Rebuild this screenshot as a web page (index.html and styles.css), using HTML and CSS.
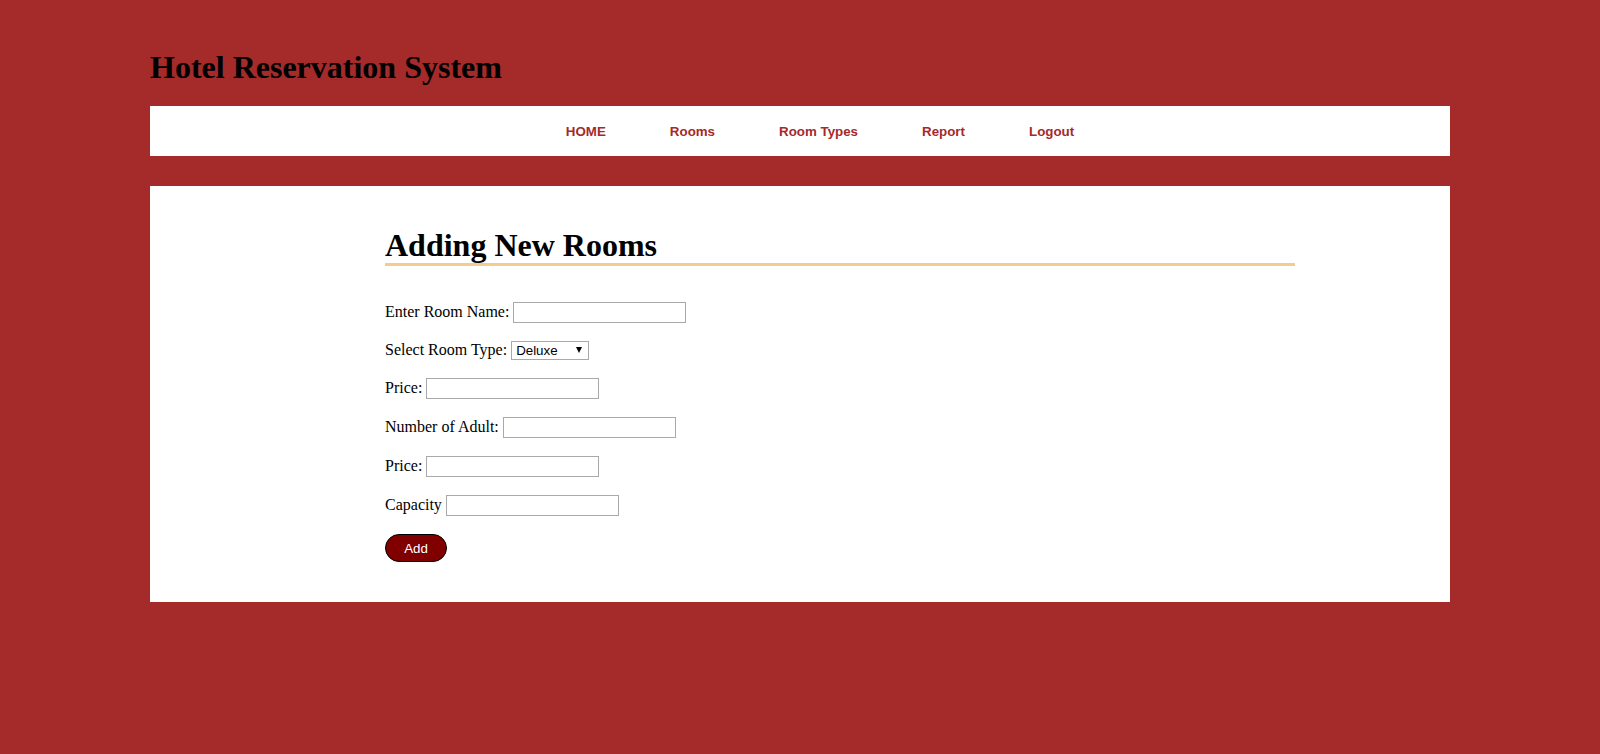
FILE: index.html
```html
<!DOCTYPE html>
<html>
<head>
<meta charset="utf-8">
<title>Hotel Reservation System</title>
<link rel="stylesheet" href="styles.css">
</head>
<body>
<div class="wrapper">
  <h1 class="site-title">Hotel Reservation System</h1>
  <nav class="nav">
    <a href="#">HOME</a>
    <a href="#">Rooms</a>
    <a href="#">Room Types</a>
    <a href="#">Report</a>
    <a href="#">Logout</a>
  </nav>
  <main class="content">
    <div class="inner">
      <h1 class="page-title">Adding New Rooms</h1>
      <form class="form">
        <div class="row"><label>Enter Room Name:</label> <input type="text" class="field"></div>
        <div class="row row-select"><label>Select Room Type:</label> <span class="select-wrap"><select class="select"><option>Deluxe</option><option>Standard</option></select></span></div>
        <div class="row"><label>Price:</label> <input type="text" class="field"></div>
        <div class="row"><label>Number of Adult:</label> <input type="text" class="field"></div>
        <div class="row"><label>Price:</label> <input type="text" class="field"></div>
        <div class="row"><label>Capacity</label> <input type="text" class="field"></div>
        <div class="actions"><button type="button" class="btn">Add</button></div>
      </form>
    </div>
  </main>
</div>
</body>
</html>
```

FILE: styles.css
```css
html, body {
  margin: 0;
  padding: 0;
}
body {
  background: #a52a2a;
  font-family: "Liberation Serif", "Times New Roman", serif;
  font-size: 16px;
  color: #000;
}
.wrapper {
  width: 1300px;
  margin: 0 auto;
  padding-top: 49px;
}
.site-title {
  margin: 0 0 20px 0;
  font-size: 32px;
  line-height: 37px;
  font-weight: bold;
}
.nav {
  background: #fff;
  height: 50px;
  display: flex;
  justify-content: center;
  align-items: center;
  gap: 0;
  padding-left: 40px;
  margin-bottom: 30px;
}
.nav a {
  font-family: "Liberation Sans", Arial, sans-serif;
  font-weight: bold;
  font-size: 13.33px;
  color: #a52a2a;
  text-decoration: none;
  padding: 0 32px;
}
.content {
  background: #fff;
  padding: 20px 0 20px 0;
}
.inner {
  margin-left: 235px;
  width: 910px;
}
.page-title {
  margin: 21px 0 0 0;
  font-size: 32px;
  line-height: 36px;
  font-weight: bold;
  border-bottom: 3px solid #f3cc8e;
}
.form {
  margin-top: 36px;
}
.row {
  display: flex;
  align-items: baseline;
  height: 23px;
  margin-bottom: 16px;
  white-space: pre;
}
.row-select {
  height: 21px;
}
.row label {
  line-height: normal;
}
.field {
  box-sizing: border-box;
  width: 173px;
  height: 21px;
  margin: 0 0 0 4px;
  padding: 1px 2px;
  border: 1px solid #a9a9a9;
  font-family: "Liberation Sans", Arial, sans-serif;
  font-size: 13.33px;
  background: #fff;
}
.select-wrap {
  position: relative;
  display: inline-block;
  margin-left: 4px;
}
.select {
  -webkit-appearance: none;
  appearance: none;
  box-sizing: border-box;
  width: 78px;
  height: 19px;
  margin: 0;
  padding: 0 0 0 4px;
  border: 1px solid #a9a9a9;
  border-radius: 0;
  background: #fff;
  color: #000;
  font-family: "Liberation Sans", Arial, sans-serif;
  font-size: 13.33px;
}
.select-wrap::after {
  content: "";
  position: absolute;
  right: 7px;
  top: 6px;
  width: 0;
  height: 0;
  border-left: 3px solid transparent;
  border-right: 3px solid transparent;
  border-top: 6px solid #000;
  pointer-events: none;
}
.actions {
  margin-bottom: 20px;
}
.btn {
  box-sizing: border-box;
  width: 62px;
  height: 28px;
  padding: 0;
  border: 1px solid #000;
  border-radius: 14px;
  background: #800000;
  color: #fff;
  font-family: "Liberation Sans", Arial, sans-serif;
  font-size: 13.33px;
  display: block;
}
```
